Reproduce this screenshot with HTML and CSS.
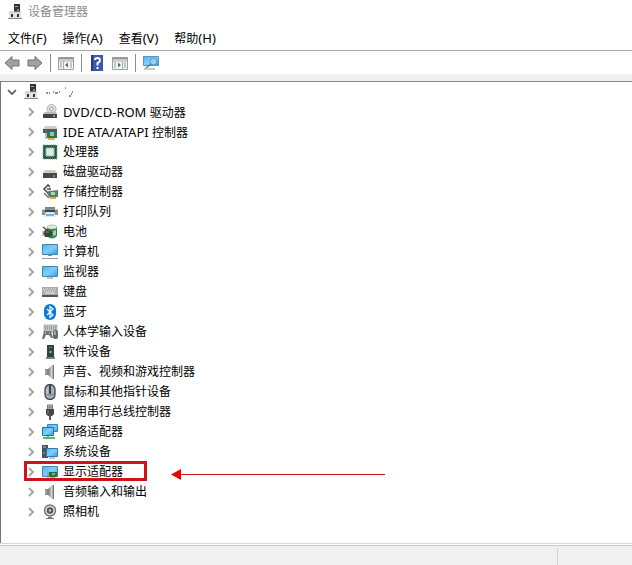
FILE: index.html
```
<!DOCTYPE html>
<html lang="zh-CN">
<head>
    <meta charset="UTF-8">
    <meta name="viewport" content="width=device-width, initial-scale=1.0">
    <title>设备管理器</title>
    <link rel="stylesheet" href="styles.css">
</head>
<body>
    <!-- shared icon shapes -->
    <svg class="symbols" aria-hidden="true">
        <defs>
            <linearGradient id="blue" x1="0" y1="0" x2="1" y2="1">
                <stop offset="0" stop-color="#4ab4ee"/>
                <stop offset="0.5" stop-color="#7fd0fb"/>
                <stop offset="1" stop-color="#2d9ee4"/>
            </linearGradient>
            <linearGradient id="metal" x1="0" y1="0" x2="1" y2="0">
                <stop offset="0" stop-color="#777"/>
                <stop offset="0.6" stop-color="#d0d0d0"/>
                <stop offset="1" stop-color="#888"/>
            </linearGradient>
        </defs>
        <symbol id="chevron" viewBox="0 0 10 10"><path d="M3 1l4 4-4 4" fill="none" stroke="#a3a3a3" stroke-width="1.9"/></symbol>
        <symbol id="manager" viewBox="0 0 16 16">
            <path d="M7 0h6v8H7z" fill="#343434"/><path d="M8 2h3v1H8z" fill="#aaa"/><path d="M10 5h2v2h-2z" fill="#888"/>
            <path d="M2 8h12v7H2z" fill="#e2e2e2"/><path d="M2 8h12" stroke="#bbb"/><path d="M1 14.500h14" stroke="#888"/>
            <path d="M4 10h2v3H4zM10 10h2v3h-2z" fill="#333"/>
        </symbol>
        <symbol id="disc" viewBox="0 0 16 16">
            <circle cx="9.500" cy="5" r="4.500" fill="#dedede" stroke="#b5b5b5"/><circle cx="9.500" cy="5" r="1.700" fill="#fff" stroke="#999"/>
            <path d="M3 8h11l1 2H1z" fill="#bbb"/><path d="M1 10h14v4H1z" fill="#444"/><path d="M11 12h2" stroke="#ddd"/>
        </symbol>
        <symbol id="ide" viewBox="0 0 16 16">
            <path d="M3 2h11l1 3H1z" fill="#ccc"/><path d="M1 5h14v4H1z" fill="#555"/>
            <path d="M5 7h10v7H5z" fill="#207b5c"/><path d="M8 8h4v4H8z" fill="#92c8ae"/><path d="M6 14h7v2H6z" fill="#e0b341"/><path d="M4 6v9" stroke="#777"/>
        </symbol>
        <symbol id="cpu" viewBox="0 0 16 16">
            <path d="M1 1h14v14H1z" fill="#285b46"/><path d="M1 1h14v14H1z" fill="none" stroke="#81a895" stroke-dasharray="1 1"/>
            <path d="M4 4h8v8H4z" fill="#dfeee5" stroke="#9dbdab"/>
        </symbol>
        <symbol id="drive" viewBox="0 0 16 16">
            <path d="M3 6h10l2 3H1z" fill="#ccc"/><path d="M1 9h14v5H1z" fill="#484848"/><path d="M11 12h2" stroke="#9e9"/>
        </symbol>
        <symbol id="storage" viewBox="0 0 16 16">
            <path d="M8 3L6 1 2 5l4 4 2-2M5 5h4" fill="none" stroke="#444" stroke-width="1.500"/>
            <path d="M5 9l3-2 8-1v7H7z" fill="#54816b"/><path d="M9 8h4v3H9z" fill="#b4d0bd"/><path d="M8 13h6v2H8z" fill="#dfad38"/><path d="M2 9l5 5" stroke="#777" stroke-width="1.500"/>
        </symbol>
        <symbol id="printer" viewBox="0 0 16 16">
            <path d="M3 3h10v3H3z" fill="#7a858c"/><path d="M0 5h16v6h-3l-1-2H4l-1 2H0z" fill="#8b9094"/><path d="M0 5h3v1H0zM13 5h3v1h-3z" fill="#ccc"/>
            <path d="M3 6h10v2H3z" fill="#3b4349"/><path d="M4 8h8l2 5H2z" fill="#d5ebf8"/><path d="M4 10h8v2H4z" fill="#71b5e2"/>
        </symbol>
        <symbol id="battery" viewBox="0 0 16 16">
            <path d="M5 3q5-3 10 0v9q-5 5-10 0z" fill="#36804f"/><ellipse cx="10" cy="3" rx="5" ry="2" fill="#e3ede6" stroke="#84a48f" stroke-width=".6"/><path d="M11 7l3-1v5l-3 1z" fill="#96d1a4"/>
            <path d="M3 6h4l3 2v3l-3 2H3L1 9z" fill="#354437"/><path d="M0 8h3M0 11h3" stroke="#96865f"/><path d="M1 3l4 3" stroke="#444" stroke-width="1.500"/><path d="M4 8h3" stroke="#7bac70"/>
        </symbol>
        <symbol id="computer" viewBox="0 0 16 16">
            <path d="M.5.500h15v10H.5z" fill="url(#blue)" stroke="#4785ab"/><path d="M6 11h4v1H6z" fill="#889"/><path d="M0 14h16v1H0z" fill="#999"/>
        </symbol>
        <symbol id="monitor" viewBox="0 0 16 16">
            <path d="M.5 2.500h15v10H.5z" fill="url(#blue)" stroke="#4785ab"/><path d="M5 14h6" stroke="#789"/>
        </symbol>
        <symbol id="keyboard" viewBox="0 0 16 16">
            <path d="M0 3h16v8H0z" fill="#aaa"/><path d="M0 11h16v2H0z" fill="#555"/>
            <path d="M1 5h14M2 7h12" stroke="#eee" stroke-dasharray="1 1"/><path d="M3 9h10" stroke="#eee"/>
        </symbol>
        <symbol id="bluetooth" viewBox="0 0 16 16">
            <rect x="2" width="12" height="16" rx="6" fill="#0b79d8"/><path d="M5 5l6 6-3 2.500v-11L11 5l-6 6" fill="none" stroke="#fff" stroke-width="1.200"/>
        </symbol>
        <symbol id="hid" viewBox="0 0 16 16">
            <path d="M2 1h13v7H2z" fill="#c5c9cb" stroke="#8b9093" stroke-width=".6"/><path d="M3 3h11M3 5h11" stroke="#707679" stroke-dasharray="1 1"/>
            <path d="M2 7h7l2 7H9L7 11H4l-2 4H0z" fill="#6d7578"/><rect x="11" y="6" width="5" height="9" rx="2" fill="#626a6d"/><path d="M13 7v4" stroke="#ddd"/><path d="M3 9h1M7 9h1" stroke="#eee"/>
        </symbol>
        <symbol id="software" viewBox="0 0 16 16">
            <path d="M5 1h7v12H5z" fill="#35403e"/><path d="M7 3h3v1H7z" fill="#75827f"/><circle cx="8.500" cy="8" r="1.200" fill="#68d2a0"/><path d="M4 13h9v2H4z" fill="#7b8281"/>
        </symbol>
        <symbol id="speaker" viewBox="0 0 16 16">
            <path d="M3 5h4v6H3z" fill="#858585"/><path d="M6 5l4-4h2v14h-2l-4-4z" fill="url(#metal)"/><path d="M11.500 1v14" stroke="#777"/><path d="M4 6v4" stroke="#bbb"/>
        </symbol>
        <symbol id="mouse" viewBox="0 0 16 16">
            <rect x="3" y=".5" width="10" height="15" rx="5" fill="#a9b0ba" stroke="#3d454d" stroke-width="1.300"/><path d="M8 1v9" stroke="#39414a" stroke-width="2"/><path d="M5 5v6" stroke="#ddd"/><path d="M4 10q4 3 8 0" fill="none" stroke="#727b85"/>
        </symbol>
        <symbol id="usb" viewBox="0 0 16 16">
            <path d="M5.500 1h5v4h-5z" fill="#ddd" stroke="#777"/><path d="M7 2v2M9 2v2" stroke="#555"/><path d="M4 5h8v5l-2 2H6l-2-2z" fill="#444"/><path d="M8 11v5" stroke="#555" stroke-width="2"/><path d="M6 6v4" stroke="#888"/>
        </symbol>
        <symbol id="network" viewBox="0 0 16 16">
            <path d="M5.500.500h10v7h-10z" fill="url(#blue)" stroke="#3787b4"/><path d="M.5 3.500h11v8H.5z" fill="url(#blue)" stroke="#2472a2"/>
            <path d="M6 12v2M1 14h12" stroke="#56bc61" stroke-width="2"/>
        </symbol>
        <symbol id="system" viewBox="0 0 16 16">
            <path d="M0 1h6v13H0z" fill="#48535b"/><path d="M1 3h3" stroke="#bbb"/><path d="M1 9h2" stroke="#7ad"/><path d="M4.500 4.500h11v8h-11z" fill="url(#blue)" stroke="#3779a1"/><path d="M7 14h6" stroke="#889"/>
        </symbol>
        <symbol id="display" viewBox="0 0 16 16">
            <path d="M.5 2.500h15v10H.5z" fill="url(#blue)" stroke="#4785ab"/><path d="M7 8h8v5H7z" fill="#23744f"/><path d="M10 9h3v2h-3z" fill="#75b785"/><path d="M8 13h5v1H8z" fill="#d9b449"/><path d="M6 7v7" stroke="#889"/>
        </symbol>
        <symbol id="camera" viewBox="0 0 16 16">
            <circle cx="8" cy="6.500" r="5.500" fill="#d6d6d6" stroke="#777" stroke-width="1.400"/><circle cx="8" cy="6.500" r="3.200" fill="#555"/><circle cx="8" cy="6.500" r="1.200" fill="#ccc"/><path d="M6 13h4v1h2v1H4v-1h2z" fill="#777"/>
        </symbol>
        <symbol id="arrow" viewBox="0 0 16 16"><path d="M1 8l7-6.500v3.500h7v6H8v3.500z" fill="#a1a1a1" stroke="#737373"/></symbol>
    </svg>

    <div class="window">
        <header class="titlebar">
            <svg class="icon"><use href="#manager"/></svg>
            <span>设备管理器</span>
        </header>

        <nav class="menubar">
            <button type="button">文件<span class="latin">(F)</span></button>
            <button type="button">操作<span class="latin">(A)</span></button>
            <button type="button">查看<span class="latin">(V)</span></button>
            <button type="button">帮助<span class="latin">(H)</span></button>
        </nav>

        <div class="toolbar">
            <button type="button" aria-label="后退"><svg class="icon"><use href="#arrow"/></svg></button>
            <button type="button" aria-label="前进"><svg class="icon flip"><use href="#arrow"/></svg></button>
            <span class="separator"></span>
            <button type="button" aria-label="显示控制台树">
                <svg class="icon" viewBox="0 0 16 16">
                    <path d="M.5 2.500h15v12H.5z" fill="#f5f6f2" stroke="#98a099"/><path d="M0 3.500h16" stroke="#919991" stroke-width="2"/><path d="M1 6h14M5.500 6v8" stroke="#a6aea6"/>
                    <path d="M2 8h2M2 10h2M2 12h2M12 8h2M12 10h2M12 12h2" stroke="#8d978d"/><path d="M10 7.500v5L7 10z" fill="#4c7a5a"/>
                </svg>
            </button>
            <span class="separator"></span>
            <button type="button" aria-label="帮助">
                <svg class="icon" viewBox="0 0 16 16">
                    <path d="M2 0h12v16H2z" fill="#3b57ae"/><path d="M2 0h2v16H2z" fill="#263a86"/><path d="M6 5q0-2 2.500-2T11 5.500Q11 7 8.500 8v2.500" fill="none" stroke="#fff" stroke-width="1.900"/><path d="M7.500 12h2v2h-2z" fill="#fff"/>
                </svg>
            </button>
            <button type="button" aria-label="显示操作窗格">
                <svg class="icon" viewBox="0 0 16 16">
                    <path d="M.5 2.500h15v12H.5z" fill="#f5f6f2" stroke="#98a099"/><path d="M0 3.500h16" stroke="#919991" stroke-width="2"/><path d="M1 6h14M10.500 6v8" stroke="#a6aea6"/>
                    <path d="M2 8h2M2 10h2M2 12h2M12 8h2M12 10h2M12 12h2" stroke="#8d978d"/><path d="M6 7.500v5L9 10z" fill="#4c7a5a"/>
                </svg>
            </button>
            <span class="separator"></span>
            <button type="button" aria-label="扫描检测硬件改动">
                <svg class="icon" viewBox="0 0 16 16">
                    <path d="M.5 1.500h15v9H.5z" fill="url(#blue)" stroke="#5793b5"/><path d="M1 14h11" stroke="#899"/><circle cx="10.500" cy="6.500" r="3.500" fill="#8fd3f5" stroke="#5c91b2"/><path d="M8 9l-5 4" stroke="#547f9c" stroke-width="1.500"/>
                </svg>
            </button>
        </div>

        <main class="tree">
            <div class="row root">
                <button class="toggle" type="button" aria-label="折叠"><svg viewBox="0 0 10 10"><path d="M1 3l4 4 4-4" fill="none" stroke="#555" stroke-width="1.700"/></svg></button>
                <svg class="icon"><use href="#manager"/></svg>
                <!-- partly hidden computer name -->
                <svg class="hidden-name" viewBox="0 0 32 16"><path d="M2 9h2M5 9h1M9 8h1M11 9h3M15 8h1M21 4h1M28 8h1M27 10h1M25 12h2" stroke="#222"/></svg>
            </div>
            <ul class="devices">
                <li><div class="row"><button class="toggle" type="button" aria-label="展开"><svg><use href="#chevron"/></svg></button><svg class="icon"><use href="#disc"/></svg><span><span class="latin">DVD/CD-ROM </span>驱动器</span></div></li>
                <li><div class="row"><button class="toggle" type="button" aria-label="展开"><svg><use href="#chevron"/></svg></button><svg class="icon"><use href="#ide"/></svg><span><span class="latin">IDE ATA/ATAPI </span>控制器</span></div></li>
                <li><div class="row"><button class="toggle" type="button" aria-label="展开"><svg><use href="#chevron"/></svg></button><svg class="icon"><use href="#cpu"/></svg><span>处理器</span></div></li>
                <li><div class="row"><button class="toggle" type="button" aria-label="展开"><svg><use href="#chevron"/></svg></button><svg class="icon"><use href="#drive"/></svg><span>磁盘驱动器</span></div></li>
                <li><div class="row"><button class="toggle" type="button" aria-label="展开"><svg><use href="#chevron"/></svg></button><svg class="icon"><use href="#storage"/></svg><span>存储控制器</span></div></li>
                <li><div class="row"><button class="toggle" type="button" aria-label="展开"><svg><use href="#chevron"/></svg></button><svg class="icon"><use href="#printer"/></svg><span>打印队列</span></div></li>
                <li><div class="row"><button class="toggle" type="button" aria-label="展开"><svg><use href="#chevron"/></svg></button><svg class="icon"><use href="#battery"/></svg><span>电池</span></div></li>
                <li><div class="row"><button class="toggle" type="button" aria-label="展开"><svg><use href="#chevron"/></svg></button><svg class="icon"><use href="#computer"/></svg><span>计算机</span></div></li>
                <li><div class="row"><button class="toggle" type="button" aria-label="展开"><svg><use href="#chevron"/></svg></button><svg class="icon"><use href="#monitor"/></svg><span>监视器</span></div></li>
                <li><div class="row"><button class="toggle" type="button" aria-label="展开"><svg><use href="#chevron"/></svg></button><svg class="icon"><use href="#keyboard"/></svg><span>键盘</span></div></li>
                <li><div class="row"><button class="toggle" type="button" aria-label="展开"><svg><use href="#chevron"/></svg></button><svg class="icon"><use href="#bluetooth"/></svg><span>蓝牙</span></div></li>
                <li><div class="row"><button class="toggle" type="button" aria-label="展开"><svg><use href="#chevron"/></svg></button><svg class="icon"><use href="#hid"/></svg><span>人体学输入设备</span></div></li>
                <li><div class="row"><button class="toggle" type="button" aria-label="展开"><svg><use href="#chevron"/></svg></button><svg class="icon"><use href="#software"/></svg><span>软件设备</span></div></li>
                <li><div class="row"><button class="toggle" type="button" aria-label="展开"><svg><use href="#chevron"/></svg></button><svg class="icon"><use href="#speaker"/></svg><span>声音、视频和游戏控制器</span></div></li>
                <li><div class="row"><button class="toggle" type="button" aria-label="展开"><svg><use href="#chevron"/></svg></button><svg class="icon"><use href="#mouse"/></svg><span>鼠标和其他指针设备</span></div></li>
                <li><div class="row"><button class="toggle" type="button" aria-label="展开"><svg><use href="#chevron"/></svg></button><svg class="icon"><use href="#usb"/></svg><span>通用串行总线控制器</span></div></li>
                <li><div class="row"><button class="toggle" type="button" aria-label="展开"><svg><use href="#chevron"/></svg></button><svg class="icon"><use href="#network"/></svg><span>网络适配器</span></div></li>
                <li><div class="row"><button class="toggle" type="button" aria-label="展开"><svg><use href="#chevron"/></svg></button><svg class="icon"><use href="#system"/></svg><span>系统设备</span></div></li>
                <li>
                    <div class="row marked"><button class="toggle" type="button" aria-label="展开"><svg><use href="#chevron"/></svg></button><svg class="icon"><use href="#display"/></svg><span>显示适配器</span></div>
                    <svg class="pointer" viewBox="0 0 215 13"><path d="M8 6.500h206" stroke="#c8161d"/><path d="M0 6.500L10 1v11z" fill="#e0040b"/></svg>
                </li>
                <li><div class="row"><button class="toggle" type="button" aria-label="展开"><svg><use href="#chevron"/></svg></button><svg class="icon"><use href="#speaker"/></svg><span>音频输入和输出</span></div></li>
                <li><div class="row"><button class="toggle" type="button" aria-label="展开"><svg><use href="#chevron"/></svg></button><svg class="icon"><use href="#camera"/></svg><span>照相机</span></div></li>
            </ul>
        </main>

        <footer class="statusbar">
            <div class="status-text"></div>
            <div class="status-side"></div>
        </footer>
    </div>
</body>
</html>
```
FILE: styles.css
```
* {
    box-sizing: border-box;
}
body {
    margin: 0;
    font-family: "Noto Sans", "Noto Sans CJK SC", sans-serif;
    font-size: 12px;
    line-height: 18px;
    color: #000;
    background-color: #fff;
}
button {
    margin: 0;
    padding: 0;
    border: 0;
    background: none;
    font: inherit;
    color: inherit;
}
svg {
    display: block;
    flex: none;
}
.symbols {
    position: absolute;
    width: 0;
    height: 0;
}
.icon {
    width: 16px;
    height: 16px;
}
.flip {
    transform: scaleX(-1);
}
.latin {
    font-size: 13px;
}
.window {
    display: flex;
    flex-direction: column;
    min-height: 100vh;
}
.titlebar {
    display: flex;
    align-items: center;
    gap: 5px;
    height: 24px;
    padding-left: 7px;
    color: #8c8c8c;
}
.menubar {
    display: flex;
    height: 27px;
    border-bottom: 1px solid #a5a5a5;
}
.menubar button {
    padding: 3px 8px 0;
}
.toolbar {
    display: flex;
    align-items: center;
    gap: 7px;
    height: 23px;
    padding-left: 4px;
}
.separator {
    width: 1px;
    height: 18px;
    background-color: #8c8c8c;
}

/* device tree */
.tree {
    flex: 1;
    border-top: 7px solid #f0f0f0;
    border-bottom: 1px solid #d9d9d9;
    box-shadow: inset 1px 0 #777, inset 0 1px #858585;
}
.row {
    display: flex;
    align-items: center;
    height: 20px;
    padding-top: 2px;
    white-space: nowrap;
}
.root {
    padding-left: 5px;
}
.root .icon {
    margin-left: 4px;
}
.hidden-name {
    width: 32px;
    height: 16px;
    margin-left: 5px;
}
.toggle {
    width: 14px;
    height: 14px;
    padding: 2px;
}
.toggle svg {
    width: 10px;
    height: 10px;
}
.devices {
    margin: 0;
    padding: 0 0 0 24px;
    list-style: none;
}
.devices li {
    display: flex;
}
.devices .icon {
    margin: 0 5px 0 4px;
}
.marked {
    padding-right: 24px;
    box-shadow: inset 0 0 0 3px #d0131a;
}
.pointer {
    align-self: flex-end;
    width: 215px;
    height: 13px;
    margin-left: 24px;
}

.statusbar {
    display: flex;
    height: 20px;
    margin-top: 1px;
    border-top: 1px solid #c8c8c8;
    background-color: #f0f0f0;
}
.status-text {
    flex: 1;
}
.status-side {
    width: 75px;
    margin-top: 2px;
    border-left: 1px solid #d0d0d0;
}
```
